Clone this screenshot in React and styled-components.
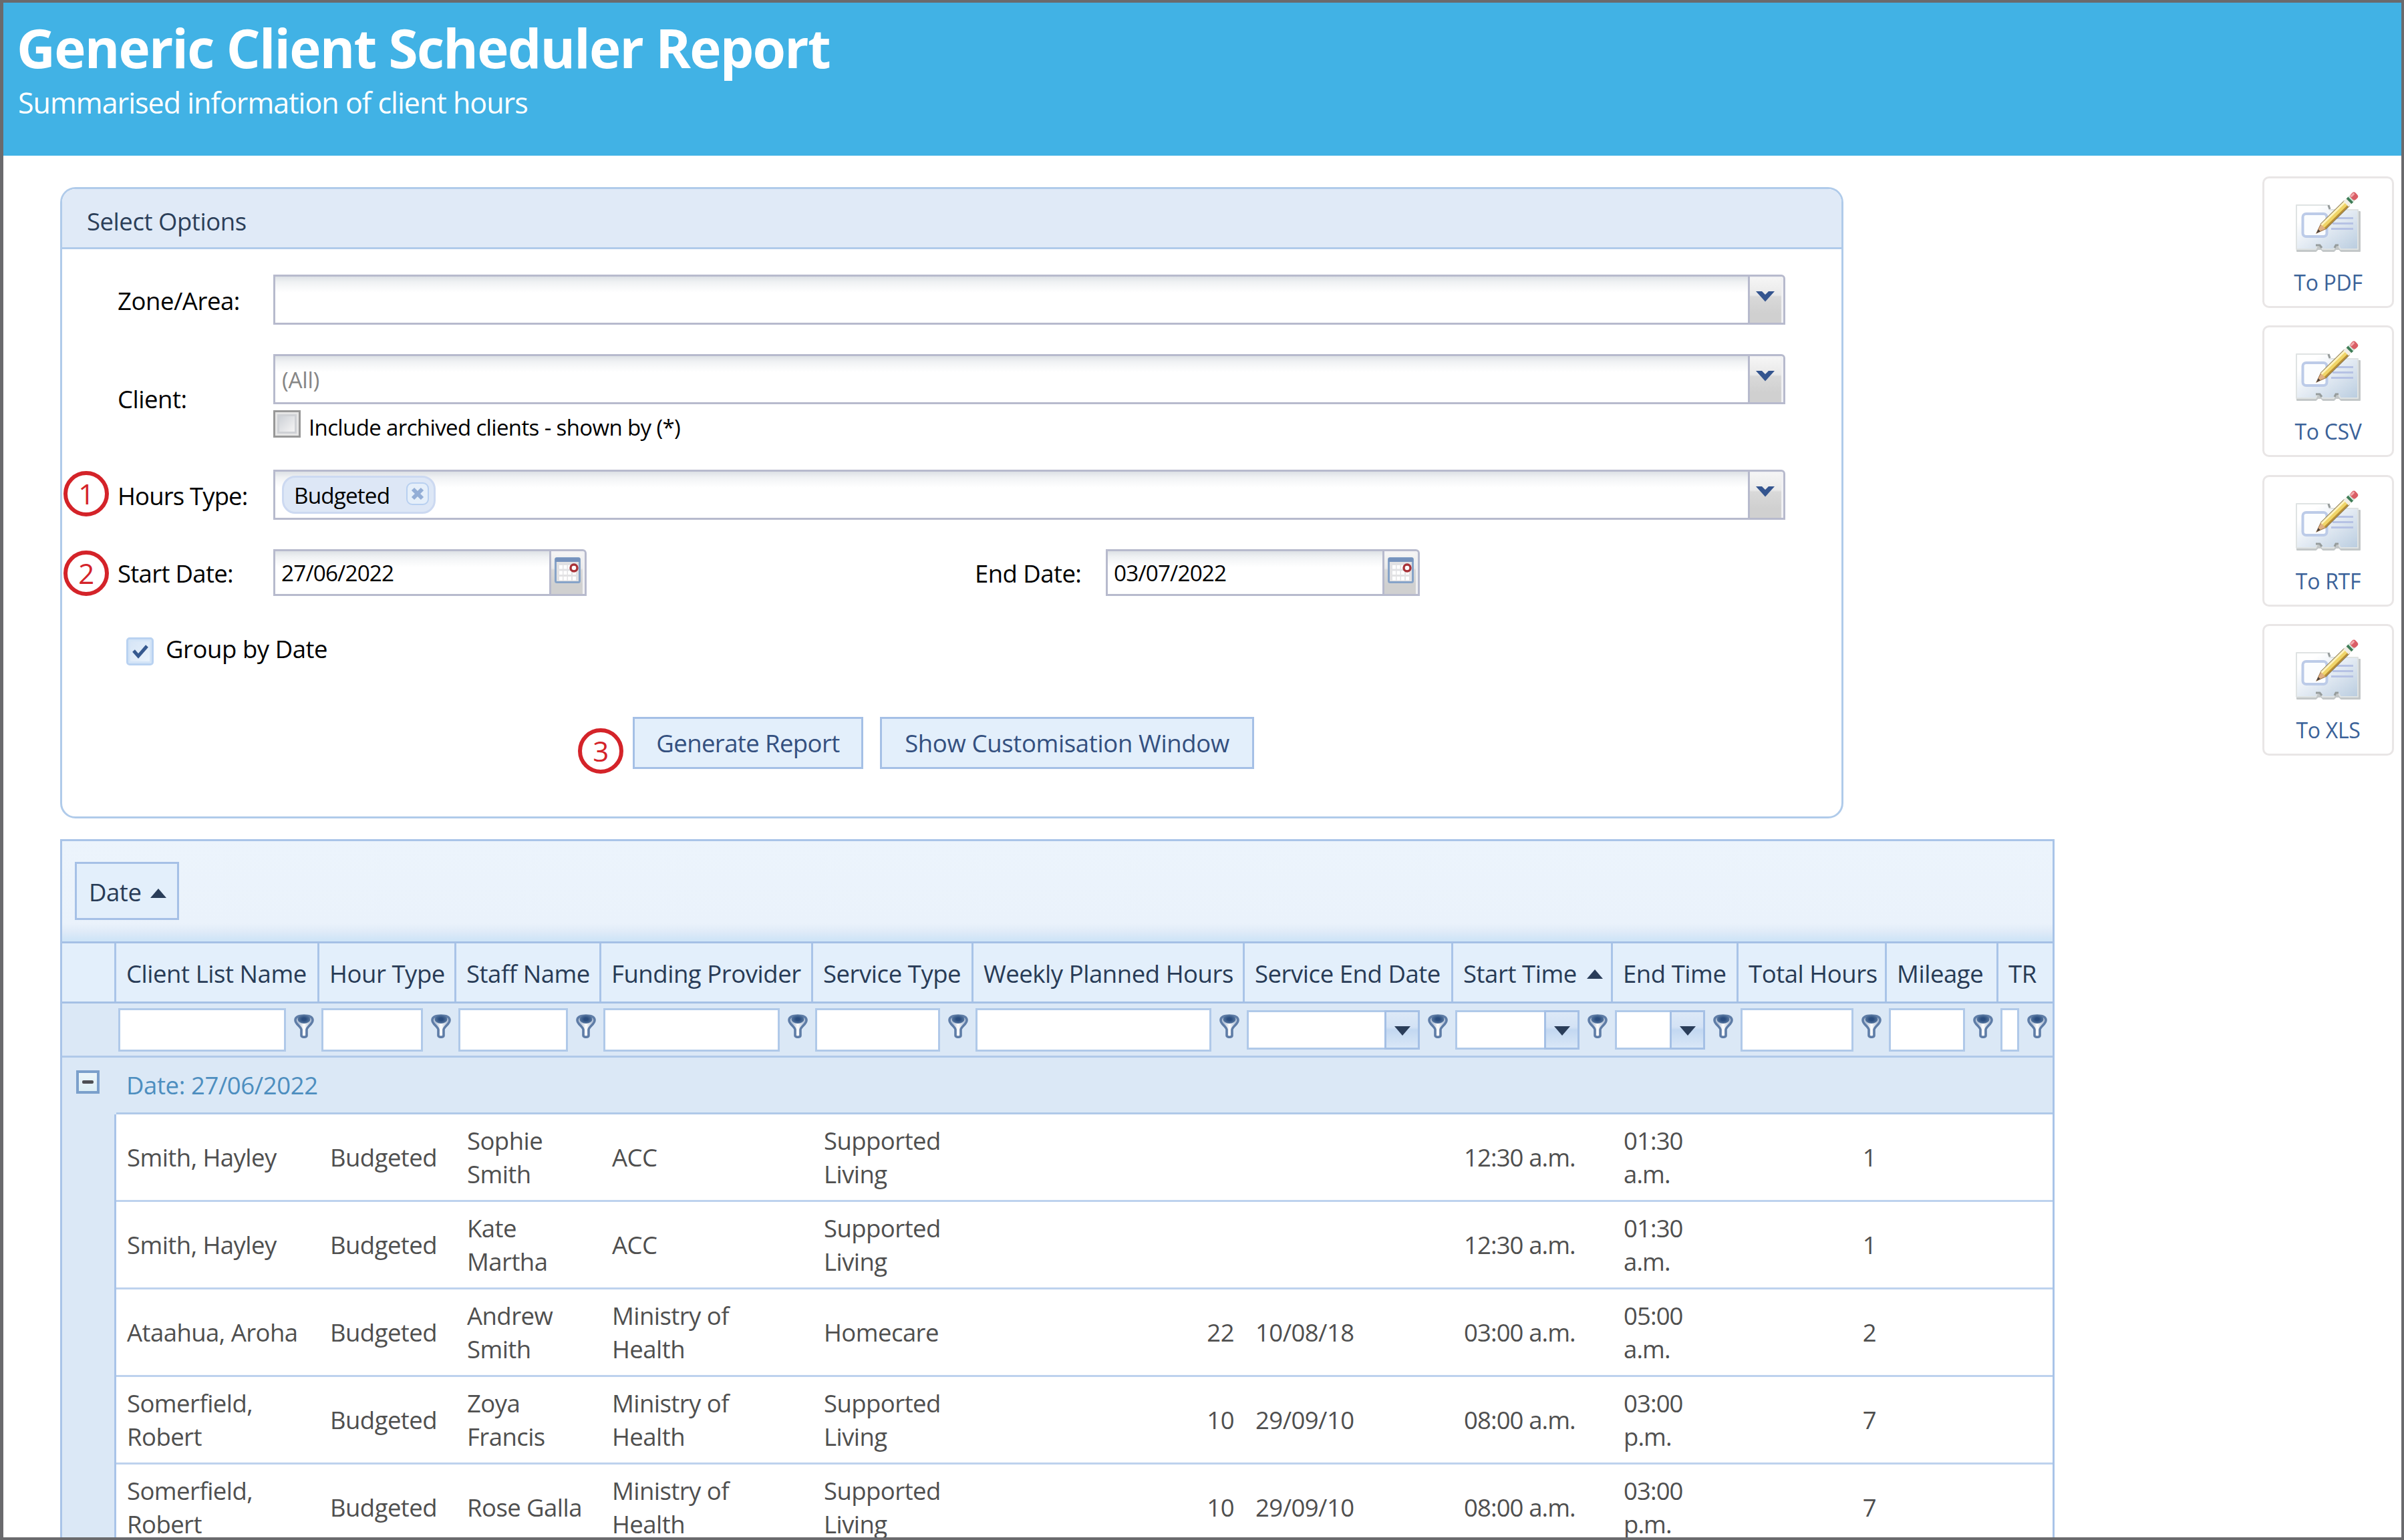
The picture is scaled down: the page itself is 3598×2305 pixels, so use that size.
import React from 'react';
import styled, { createGlobalStyle, css } from 'styled-components';

const Global = createGlobalStyle`
  * { box-sizing: border-box; }
  body { margin: 0; background: #fff; }
  svg { display: block; flex: none; }
`;

const Page = styled.div`
  width: 3598px;
  height: 2305px;
  overflow: hidden;
  display: flex;
  flex-direction: column;
  border: 4px solid #6a6a6d;
  border-left-width: 5px;
  background: #fff;
  font-family: 'Open Sans', 'Noto Sans', sans-serif;
  font-size: 36.5px;
  letter-spacing: -0.45px;
  line-height: 50px;
  color: #000;
`;

const Banner = styled.header`
  flex: none;
  height: 229px;
  padding: 17px 0 0 20px;
  background: #41b2e5;
  color: #fff;
`;

const Title = styled.h1`
  margin: 0;
  font-size: 80px;
  line-height: 100px;
  font-weight: 700;
  letter-spacing: -1.75px;
`;

const Subtitle = styled.p`
  margin: 3px 0 0 2px;
  font-size: 43px;
  line-height: 60px;
  letter-spacing: -0.98px;
`;

const Main = styled.main`
  flex: 1;
  min-height: 0;
  display: flex;
  justify-content: space-between;
  align-items: flex-start;
  padding: 0 11px 0 85px;
`;

const Content = styled.div`
  padding-top: 47px;
`;

/* ---------- options panel ---------- */

const Panel = styled.section`
  width: 2669px;
  height: 945px;
  border: 3px solid #b0cbea;
  border-radius: 23px;
  overflow: hidden;
`;

const PanelHeader = styled.div`
  height: 90px;
  padding: 8px 37px 0;
  display: flex;
  align-items: center;
  background: #e0eaf7;
  border-bottom: 3px solid #b0cbea;
  color: #2c3f59;
`;

const Form = styled.div`
  padding: 38px 84px 0 83px;
  display: flex;
  flex-direction: column;
`;

const FormRow = styled.div`
  position: relative;
  display: flex;
  align-items: center;
  height: ${(p) => p.$h}px;
  margin-bottom: ${(p) => p.$gap}px;
  ${(p) => p.$pad && css`padding-left: ${p.$pad}px;`}
`;

const Label = styled.label`
  width: ${(p) => p.$w || 233}px;
  flex: none;
  padding-top: 2px;
  letter-spacing: ${(p) => p.$ls || -0.45}px;
`;

const Stack = styled.div`
  flex: 1;
  align-self: stretch;
`;

const Field = styled.div`
  flex: ${(p) => (p.$w ? 'none' : '1')};
  width: ${(p) => (p.$w ? `${p.$w}px` : 'auto')};
  height: ${(p) => p.$h || 75}px;
  display: flex;
  border: 3px solid #b7bacd;
  border-radius: 0 6px 0 0;
  background: linear-gradient(#dde1e5, #eff1f3 8px, #f7f8f9 15px, #fff 24px);
  font-size: 33.3px;
`;

const FieldText = styled.div`
  flex: 1;
  display: flex;
  align-items: center;
  padding: 0 0 0 ${(p) => (p.$date ? 9 : 10)}px;
  color: ${(p) => (p.$muted ? '#868686' : '#000')};
  letter-spacing: ${(p) => (p.$date ? '-0.85px' : '-0.3px')};
`;

const FieldButton = styled.div`
  width: 53px;
  display: flex;
  align-items: center;
  justify-content: center;
  padding: 0 ${(p) => (p.$date ? 1 : 4)}px ${(p) => (p.$date ? 7 : 10)}px 0;
  border-left: 3px solid #b7bacd;
  border-radius: 0 4px 0 0;
  background: linear-gradient(#f6f6f6, #e9e9e9 40%, #d9d9d9 44%, #d0d0d0 80%);
  box-shadow: inset -3px 2px 1px #f1f1f3;
`;

const Chip = styled.span`
  display: flex;
  align-items: center;
  justify-content: space-between;
  width: 230px;
  height: 57px;
  padding: 0 7px 4px 15px;
  border: 3px solid #ccd9f1;
  border-radius: 20px;
  background: #dde7f6;
  letter-spacing: -0.85px;
`;

const ChipText = styled.span`
  padding-top: 5px;
`;

const ChipClose = styled.span`
  width: 34px;
  height: 34px;
  display: flex;
  align-items: center;
  justify-content: center;
  border: 2px solid #b8d0f0;
  border-radius: 9px;
  background: #e5effa;
`;

const CheckLine = styled.div`
  display: flex;
  gap: 12px;
  height: 48px;
  margin-top: 9px;
  font-size: 33px;
  line-height: 51px;
  letter-spacing: -0.63px;
`;

const EmptyBox = styled.span`
  width: 41px;
  height: 41px;
  border: 3px solid #989898;
  background: linear-gradient(135deg, #c3c8cf, #eeeeef 70%, #f8f8f8);
  box-shadow: inset 0 0 0 3px #e6e6e6, inset 0 0 0 6px #cfd1d5;
`;

const CheckedBox = styled.span`
  width: 41px;
  height: 42px;
  margin: 7px 18px 0 0;
  display: flex;
  align-items: center;
  justify-content: center;
  border: 3px solid #b9d2f1;
  border-radius: 5px;
  background: linear-gradient(135deg, #d5e4f6, #eaf3fc);
  box-shadow: inset 0 0 0 3px #d3e4f7;
`;

const Spacer = styled.div`
  width: 581px;
  flex: none;
`;

const Button = styled.button`
  width: ${(p) => p.$w}px;
  height: 78px;
  padding: 0;
  border: 3px solid #a5c0e6;
  background: #e3effb;
  color: #34507f;
  font: inherit;
  letter-spacing: ${(p) => p.$ls}px;
`;

const ButtonRow = styled(FormRow)`
  gap: 25px;
`;

const Badge = styled.span`
  position: absolute;
  left: ${(p) => p.$x}px;
  top: ${(p) => p.$y}px;
  width: 68px;
  height: 68px;
  display: flex;
  align-items: center;
  justify-content: center;
  border: 6px solid #d42329;
  border-radius: 50%;
  color: #d42329;
  font-size: 42px;
`;

/* ---------- export buttons ---------- */

const Exports = styled.aside`
  padding-top: 31px;
  display: flex;
  flex-direction: column;
  gap: 26.4px;
`;

const ExportButton = styled.div`
  width: 197px;
  height: 197px;
  padding-top: 20px;
  display: flex;
  flex-direction: column;
  align-items: center;
  border: 3px solid #e9e6e6;
  border-radius: 10px;
  color: #3b6299;
  font-size: 32px;
  letter-spacing: -0.3px;
`;

const ExportLabel = styled.span`
  margin-top: 19px;
`;

/* ---------- data grid ---------- */

const Grid = styled.section`
  width: 2985px;
  margin-top: 31px;
  border: 3px solid #a9c4e8;
  color: #4f4f4f;
`;

const GroupPanel = styled.div`
  height: 153px;
  padding: 31px 19px;
  background: linear-gradient(#ecf4fc, #eaf2fb 82%, #e0ebf8 90%, #d0e5f7 98%);
  border-bottom: 3px solid #a5c0e5;
`;

const GroupChip = styled.div`
  width: 156px;
  height: 87px;
  padding: 2px 0 0 18px;
  display: flex;
  align-items: center;
  gap: 14px;
  border: 3px solid #a5c0e6;
  background: #e3effb;
  color: #283b56;
`;

const SortMark = styled.span`
  padding-top: ${(p) => p.$drop}px;
`;

const columns = [
  { title: 'Client List Name', width: 304 },
  { title: 'Hour Type', width: 205 },
  { title: 'Staff Name', width: 217 },
  { title: 'Funding Provider', width: 317 },
  { title: 'Service Type', width: 240 },
  { title: 'Weekly Planned Hours', width: 406, number: true },
  { title: 'Service End Date', width: 312, picker: true },
  { title: 'Start Time', width: 239, picker: true, sorted: true },
  { title: 'End Time', width: 188, picker: true },
  { title: 'Total Hours', width: 222, number: true },
  { title: 'Mileage', width: 167 },
  { title: 'TR', width: 81 },
];
const tracks = columns.map((c) => `${c.width}px`).join(' ');

const HeaderRow = styled.div`
  display: grid;
  grid-template-columns: 81px ${tracks};
  height: 90px;
  background: #e3effb;
  border-bottom: 3px solid #a5c0e5;
  color: #283b56;
`;

const HeaderCell = styled.div`
  display: flex;
  align-items: center;
  gap: 15px;
  padding: 2px 0 0 15px;
  white-space: nowrap;
  border-right: 3px solid #a9c4e8;
  &:last-child { border-right: 0; }
`;

const FilterRow = styled.div`
  display: grid;
  grid-template-columns: 81px ${tracks};
  height: 81px;
  background: #dbe8f6;
  border-bottom: 3px solid #b0c9e9;
`;

const FilterCell = styled.div`
  display: flex;
  padding: 7px 8px 0 3px;
`;

const FilterInput = styled.div`
  flex: 1;
  min-width: 0;
  height: ${(p) => (p.$picker ? 59 : 65)}px;
  margin: ${(p) => (p.$picker ? 3 : 0)}px 12px 0 0;
  display: flex;
  justify-content: flex-end;
  border: 3px solid #b0c9e9;
  background: #fff;
`;

const PickerButton = styled.div`
  width: 53px;
  margin: -3px;
  display: flex;
  align-items: center;
  justify-content: center;
  padding-top: 3px;
  border: 3px solid #a5c0e5;
  background: linear-gradient(#dde9f7, #d3e2f5 42%, #c3d8f1 50%, #d9e7f7);
`;

const IconSlot = styled.div`
  padding-top: 9px;
`;

const GroupRow = styled.div`
  display: grid;
  grid-template-columns: 81px 1fr;
  height: 85px;
  background: #dbe8f6;
`;

const Collapse = styled.span`
  width: 35px;
  height: 35px;
  margin: 19px 0 0 21px;
  display: flex;
  align-items: center;
  justify-content: center;
  border: 4px solid #7ba0cb;
  background: linear-gradient(#ecf6fa, #dceef5);
`;

const Dash = styled.i`
  width: 17px;
  height: 5px;
  border-radius: 2px;
  background: #4d5054;
`;

const GroupTitle = styled.div`
  display: flex;
  align-items: center;
  padding-left: 15px;
  border-bottom: 3px solid #b0c9e9;
  color: #4d8ebf;
  letter-spacing: -0.4px;
`;

const Body = styled.div`
  display: flex;
`;

const Gutter = styled.div`
  width: 81px;
  flex: none;
  background: #dbe8f6;
  border-right: 3px solid #a9c4e8;
`;

const Rows = styled.div`
  flex: 1;
`;

const DataRow = styled.div`
  display: grid;
  grid-template-columns: ${tracks};
  height: 131px;
  border-bottom: 3px solid #bdd2ee;
`;

const DataCell = styled.div`
  display: flex;
  align-items: center;
  justify-content: ${(p) => (p.$number ? 'flex-end' : 'flex-start')};
  padding: 0 ${(p) => (p.$number ? 16 : 0)}px 0 ${(p) => (p.$number ? 0 : 16)}px;
  white-space: pre-line;
  letter-spacing: ${(p) => (p.$time ? -0.9 : -0.55)}px;
`;

/* ---------- icons ---------- */

const Chevron = () => (
  <svg width="30" height="17" viewBox="0 0 30 17">
    <path d="M1 1H10L15 6L20 1H29L15 16.5Z" fill="#34558f" />
  </svg>
);

const Calendar = () => (
  <svg width="39" height="39" viewBox="0 0 39 39">
    <rect x="1.5" y="1.5" width="36" height="36" rx="2" fill="#e2e2e4" stroke="#86a3c8" strokeWidth="3" />
    <rect x="1" y="1" width="37" height="6" rx="1" fill="#7693bd" />
    <g fill="#fff">
      {[12, 20.5, 29].map((y) =>
        [7, 13.5, 20, 27].map((x) => <rect key={`${x}-${y}`} x={x} y={y} width="5" height="5.5" />)
      )}
    </g>
    <circle cx="29" cy="16" r="5" fill="#fff" stroke="#a83238" strokeWidth="3.4" />
  </svg>
);

const Cross = () => (
  <svg width="20" height="20" viewBox="0 0 20 20">
    <path d="M3 3L17 17M17 3L3 17" stroke="#93aed6" strokeWidth="6" />
  </svg>
);

const Tick = () => (
  <svg width="26" height="24" viewBox="0 0 26 24">
    <path d="M3 11L10 19L23 4" fill="none" stroke="#36598f" strokeWidth="5" />
  </svg>
);

const Triangle = ({ down }) => (
  <svg width="24" height="14" viewBox="0 0 24 14">
    <path d={down ? 'M0 0H24L12 14Z' : 'M0 14H24L12 0Z'} fill="#2a3d59" />
  </svg>
);

const Funnel = () => (
  <svg width="30" height="36" viewBox="0 0 30 36">
    <defs>
      <linearGradient id="funnelBody" x1="0" y1="0" x2="1" y2="0">
        <stop offset="0.2" stopColor="#b4c3d8" />
        <stop offset="0.5" stopColor="#ffffff" />
        <stop offset="0.85" stopColor="#b4c3d8" />
      </linearGradient>
      <radialGradient id="funnelBowl">
        <stop offset="0.3" stopColor="#2a4d7f" />
        <stop offset="1" stopColor="#56769f" />
      </radialGradient>
    </defs>
    <path
      d="M2 9C2 4 7 2 15 2S28 4 28 9C28 15 20 18 19 23V32C19 35 11 35 11 32V23C10 18 2 15 2 9Z"
      fill="url(#funnelBody)"
      stroke="#5f7da7"
      strokeWidth="3.6"
      strokeLinejoin="round"
    />
    <ellipse cx="15" cy="7.500" rx="9.500" ry="6.500" fill="url(#funnelBowl)" />
  </svg>
);

const CardPencil = () => (
  <svg width="100" height="92" viewBox="0 0 100 92">
    <defs>
      <linearGradient id="cardFace" x1="0" y1="0" x2="1" y2="1">
        <stop offset="0.2" stopColor="#ffffff" />
        <stop offset="0.55" stopColor="#e1e9f2" />
        <stop offset="1" stopColor="#b9ccdf" />
      </linearGradient>
    </defs>
    <path
      d="M2 23H50V28L56 30H97V89H69L66 86H61L58 89H42L39 86H34L31 89H3Z"
      fill="#c3c7c8"
      stroke="#c3c7c8"
      strokeWidth="2"
      strokeLinejoin="round"
    />
    <path
      d="M2 20H49L52 27H94V86H68L65 81H60L58 86H41L38 81H33L31 86H2Z"
      fill="url(#cardFace)"
      stroke="#dfe3e3"
      strokeWidth="2"
      strokeLinejoin="round"
    />
    <path d="M50 20L52 26M31 80H37L40 84M59 84L61 80H65" fill="none" stroke="#969c9c" strokeWidth="3" />
    <rect x="11.500" y="33" width="36" height="34" rx="5" fill="#fbfdff" stroke="#bccbe8" strokeWidth="4" />
    <path d="M56 39.500H87M56 47.500H87M54 55.500H87" stroke="#b6c2e4" strokeWidth="2.800" />
    <g transform="translate(32 62) rotate(-44.500)">
      <path d="M0 0L15 -5.500V5.500Z" fill="#e0b184" stroke="#9a7048" strokeWidth="1" />
      <path d="M0 0L6 -2.200V2.200Z" fill="#4a4340" />
      <rect x="14" y="-5.500" width="50" height="11" fill="#f0d568" />
      <rect x="14" y="-5.500" width="50" height="3.500" fill="#fff3bd" />
      <rect x="14" y="2.500" width="50" height="3" fill="#b98f36" />
      <path d="M14 -5.500H64M14 5.500H64" stroke="#8b7a55" strokeWidth="1" />
      <rect x="62" y="-5.500" width="8" height="11" fill="#f1eee6" />
      <rect x="68" y="-5.500" width="4" height="11" fill="#3f7d58" />
      <rect x="72" y="-5.500" width="3" height="11" fill="#cfe3d6" />
      <rect x="74" y="-5.500" width="10" height="11" rx="4" fill="#da5e66" />
      <rect x="75" y="-4.500" width="7" height="3" rx="1" fill="#f3a9ac" />
    </g>
  </svg>
);

/* ---------- data ---------- */

const rows = [
  ['Smith, Hayley', 'Budgeted', 'Sophie\nSmith', 'ACC', 'Supported\nLiving', '', '', '12:30 a.m.', '01:30\na.m.', '1', '', ''],
  ['Smith, Hayley', 'Budgeted', 'Kate\nMartha', 'ACC', 'Supported\nLiving', '', '', '12:30 a.m.', '01:30\na.m.', '1', '', ''],
  ['Ataahua, Aroha', 'Budgeted', 'Andrew\nSmith', 'Ministry of\nHealth', 'Homecare', '22', '10/08/18', '03:00 a.m.', '05:00\na.m.', '2', '', ''],
  ['Somerfield,\nRobert', 'Budgeted', 'Zoya\nFrancis', 'Ministry of\nHealth', 'Supported\nLiving', '10', '29/09/10', '08:00 a.m.', '03:00\np.m.', '7', '', ''],
  ['Somerfield,\nRobert', 'Budgeted', 'Rose Galla', 'Ministry of\nHealth', 'Supported\nLiving', '10', '29/09/10', '08:00 a.m.', '03:00\np.m.', '7', '', ''],
];

const Combo = ({ children, muted }) => (
  <Field>
    <FieldText $muted={muted}>{children}</FieldText>
    <FieldButton><Chevron /></FieldButton>
  </Field>
);

const DateField = ({ value, width }) => (
  <Field $w={width} $h={70}>
    <FieldText $date>{value}</FieldText>
    <FieldButton $date><Calendar /></FieldButton>
  </Field>
);

const OptionsPanel = () => (
  <Panel>
    <PanelHeader>Select Options</PanelHeader>
    <Form>
      <FormRow $h={75} $gap={44}>
        <Label>Zone/Area:</Label>
        <Combo />
      </FormRow>
      <FormRow $h={132} $gap={41}>
        <Label>Client:</Label>
        <Stack>
          <Combo muted>(All)</Combo>
          <CheckLine>
            <EmptyBox />
            Include archived clients - shown by (*)
          </CheckLine>
        </Stack>
      </FormRow>
      <FormRow $h={75} $gap={44}>
        <Badge $x={-81} $y={2}>1</Badge>
        <Label $ls={-0.85}>Hours Type:</Label>
        <Combo>
          <Chip>
            <ChipText>Budgeted</ChipText>
            <ChipClose><Cross /></ChipClose>
          </Chip>
        </Combo>
      </FormRow>
      <FormRow $h={70} $gap={58}>
        <Badge $x={-81} $y={2}>2</Badge>
        <Label $ls={-0.7}>Start Date:</Label>
        <DateField value="27/06/2022" width={469} />
        <Spacer />
        <Label $w={196} $ls={-0.55}>End Date:</Label>
        <DateField value="03/07/2022" width={470} />
      </FormRow>
      <FormRow $h={42} $gap={81} $pad={13}>
        <CheckedBox><Tick /></CheckedBox>
        Group by Date
      </FormRow>
      <ButtonRow $h={78} $gap={0} $pad={771}>
        <Badge $x={689} $y={17}>3</Badge>
        <Button $w={345} $ls={-0.6}>Generate Report</Button>
        <Button $w={560} $ls={-0.35}>Show Customisation Window</Button>
      </ButtonRow>
    </Form>
  </Panel>
);

const ReportGrid = () => (
  <Grid>
    <GroupPanel>
      <GroupChip>Date <SortMark $drop={5}><Triangle /></SortMark></GroupChip>
    </GroupPanel>
    <HeaderRow>
      <HeaderCell />
      {columns.map((c) => (
        <HeaderCell key={c.title}>
          {c.title}
          {c.sorted && <SortMark $drop={3}><Triangle /></SortMark>}
        </HeaderCell>
      ))}
    </HeaderRow>
    <FilterRow>
      <span />
      {columns.map((c) => (
        <FilterCell key={c.title}>
          <FilterInput $picker={c.picker}>
            {c.picker && <PickerButton><Triangle down /></PickerButton>}
          </FilterInput>
          <IconSlot><Funnel /></IconSlot>
        </FilterCell>
      ))}
    </FilterRow>
    <GroupRow>
      <Collapse><Dash /></Collapse>
      <GroupTitle>Date: 27/06/2022</GroupTitle>
    </GroupRow>
    <Body>
      <Gutter />
      <Rows>
        {rows.map((row, i) => (
          <DataRow key={i}>
            {row.map((cell, j) => (
              <DataCell key={columns[j].title} $number={columns[j].number} $time={j === 7 || j === 8}>
                {cell}
              </DataCell>
            ))}
          </DataRow>
        ))}
      </Rows>
    </Body>
  </Grid>
);

export default function App() {
  return (
    <Page>
      <Global />
      <Banner>
        <Title>Generic Client Scheduler Report</Title>
        <Subtitle>Summarised information of client hours</Subtitle>
      </Banner>
      <Main>
        <Content>
          <OptionsPanel />
          <ReportGrid />
        </Content>
        <Exports>
          {['To PDF', 'To CSV', 'To RTF', 'To XLS'].map((label) => (
            <ExportButton key={label}>
              <CardPencil />
              <ExportLabel>{label}</ExportLabel>
            </ExportButton>
          ))}
        </Exports>
      </Main>
    </Page>
  );
}
